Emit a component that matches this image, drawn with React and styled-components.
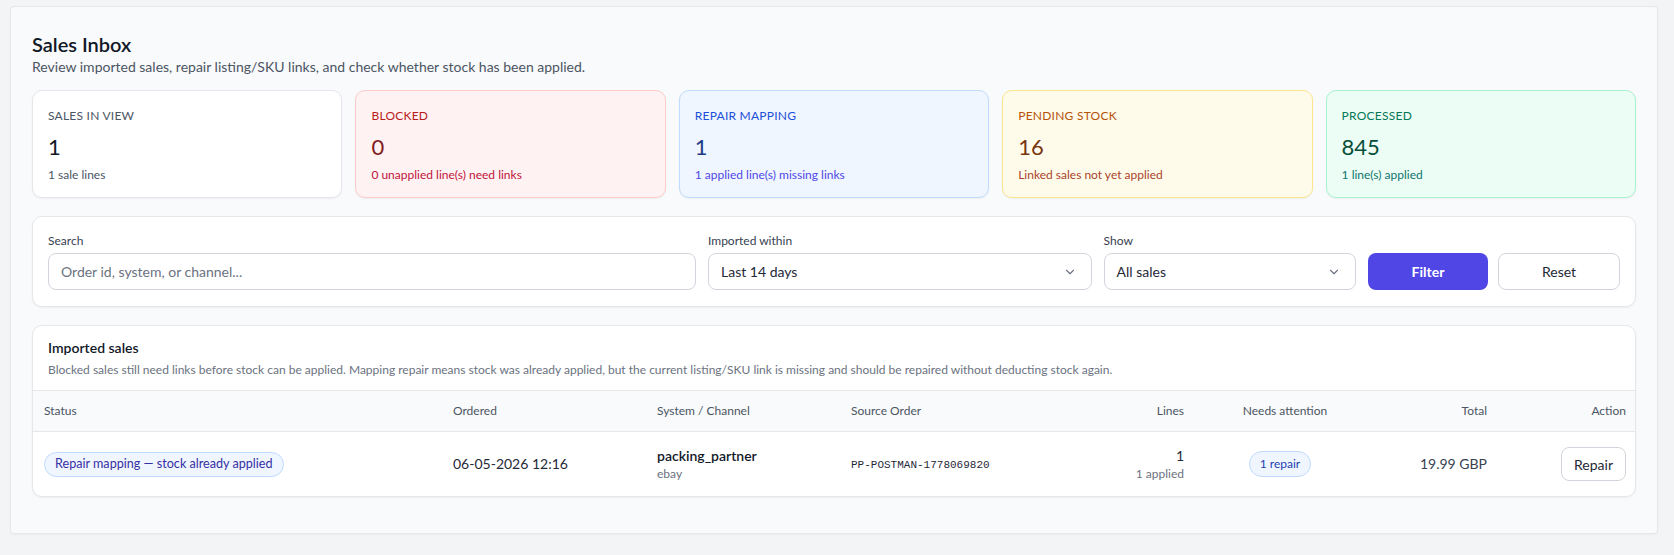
import styled, { createGlobalStyle } from "styled-components";

const GlobalStyle = createGlobalStyle`
  * { box-sizing: border-box; }
  body {
    margin: 0;
    background: #f3f4f6;
    font-family: Lato, "Noto Sans", sans-serif;
    color: #111827;
  }
`;

const tones = {
  neutral: { bg: "#ffffff", border: "#e5e7eb", label: "#4b5563", value: "#111827", sub: "#4b5563" },
  red: { bg: "#fef2f2", border: "#fecaca", label: "#b91c1c", value: "#7f1d1d", sub: "#be123c" },
  blue: { bg: "#eff6ff", border: "#bfdbfe", label: "#1d4ed8", value: "#1e3a8a", sub: "#4f46e5" },
  amber: { bg: "#fffbeb", border: "#fde68a", label: "#b45309", value: "#78350f", sub: "#a8432a" },
  green: { bg: "#ecfdf5", border: "#a7f3d0", label: "#047857", value: "#064e3b", sub: "#0f766e" },
};

const stats = [
  { label: "Sales in view", value: "1", sub: "1 sale lines", tone: "neutral" },
  { label: "Blocked", value: "0", sub: "0 unapplied line(s) need links", tone: "red" },
  { label: "Repair mapping", value: "1", sub: "1 applied line(s) missing links", tone: "blue" },
  { label: "Pending stock", value: "16", sub: "Linked sales not yet applied", tone: "amber" },
  { label: "Processed", value: "845", sub: "1 line(s) applied", tone: "green" },
];

const Chevron = () => (
  <svg width="14" height="14" viewBox="0 0 20 20" fill="none" stroke="#6b7280" strokeWidth="1.6" strokeLinecap="round" strokeLinejoin="round">
    <path d="M5 7.5l5 5 5-5" />
  </svg>
);

export default function App() {
  return (
    <Page>
      <GlobalStyle />
      <Panel>
        <Title>Sales Inbox</Title>
        <Subtitle>Review imported sales, repair listing/SKU links, and check whether stock has been applied.</Subtitle>

        <StatGrid>
          {stats.map((s) => (
            <StatCard key={s.label} $tone={s.tone}>
              <StatLabel $tone={s.tone}>{s.label}</StatLabel>
              <StatValue $tone={s.tone}>{s.value}</StatValue>
              <StatSub $tone={s.tone}>{s.sub}</StatSub>
            </StatCard>
          ))}
        </StatGrid>

        <FilterCard>
          <Field>
            <FieldLabel>Search</FieldLabel>
            <TextInput placeholder="Order id, system, or channel..." />
          </Field>
          <Field>
            <FieldLabel>Imported within</FieldLabel>
            <SelectBox>
              <span>Last 14 days</span>
              <Chevron />
            </SelectBox>
          </Field>
          <Field>
            <FieldLabel>Show</FieldLabel>
            <SelectBox>
              <span>All sales</span>
              <Chevron />
            </SelectBox>
          </Field>
          <Buttons>
            <PrimaryButton>Filter</PrimaryButton>
            <OutlineButton>Reset</OutlineButton>
          </Buttons>
        </FilterCard>

        <TableCard>
          <TableHead>
            <TableTitle>Imported sales</TableTitle>
            <TableDesc>
              Blocked sales still need links before stock can be applied. Mapping repair means stock was already applied, but the current listing/SKU link is missing and should be repaired without deducting stock again.
            </TableDesc>
          </TableHead>
          <Table>
            <colgroup>
              <col style={{ width: 409 }} />
              <col style={{ width: 204 }} />
              <col style={{ width: 194 }} />
              <col style={{ width: 235 }} />
              <col style={{ width: 120 }} />
              <col style={{ width: 180 }} />
              <col style={{ width: 123 }} />
              <col style={{ width: 139 }} />
            </colgroup>
            <thead>
              <tr>
                <Th>Status</Th>
                <Th>Ordered</Th>
                <Th>System / Channel</Th>
                <Th>Source Order</Th>
                <Th $align="right">Lines</Th>
                <Th $align="center">Needs attention</Th>
                <Th $align="right">Total</Th>
                <Th $align="right">Action</Th>
              </tr>
            </thead>
            <tbody>
              <tr>
                <Td>
                  <Pill>Repair mapping — stock already applied</Pill>
                </Td>
                <Td>06-05-2026 12:16</Td>
                <Td>
                  <Strong>packing_partner</Strong>
                  <Muted>ebay</Muted>
                </Td>
                <Td>
                  <Mono>PP-POSTMAN-1778069820</Mono>
                </Td>
                <Td $align="right">
                  <div>1</div>
                  <Muted>1 applied</Muted>
                </Td>
                <Td $align="center">
                  <Pill $small>1 repair</Pill>
                </Td>
                <Td $align="right" $soft>19.99 GBP</Td>
                <Td $align="right">
                  <SmallButton>Repair</SmallButton>
                </Td>
              </tr>
            </tbody>
          </Table>
        </TableCard>
      </Panel>
    </Page>
  );
}

const Page = styled.div`
  padding: 6px 16px 23px 10px;
`;

const Panel = styled.div`
  background: #f9fafb;
  border: 1px solid #e5e7eb;
  border-radius: 4px;
  box-shadow: 0 1px 2px rgba(0, 0, 0, 0.04);
  padding: 26px 21px 36px;
`;

const Title = styled.h1`
  margin: 0;
  font-size: 20px;
  line-height: 22px;
  font-weight: 600;
  color: #111827;
`;

const Subtitle = styled.p`
  margin: 2px 0 0;
  font-size: 14px;
  line-height: 20px;
  color: #4b5563;
`;

const StatGrid = styled.div`
  margin-top: 13px;
  display: grid;
  grid-template-columns: repeat(5, minmax(0, 1fr));
  gap: 13px;
`;

const StatCard = styled.div`
  background: ${(p) => tones[p.$tone].bg};
  border: 1px solid ${(p) => tones[p.$tone].border};
  border-radius: 10px;
  box-shadow: 0 1px 2px rgba(0, 0, 0, 0.05);
  padding: 17px 15px 13px;
  height: 108px;
`;

const StatLabel = styled.div`
  font-size: 12px;
  line-height: 16px;
  text-transform: uppercase;
  letter-spacing: 0.02em;
  color: ${(p) => tones[p.$tone].label};
`;

const StatValue = styled.div`
  margin-top: 9px;
  font-size: 22px;
  line-height: 28px;
  color: ${(p) => tones[p.$tone].value};
`;

const StatSub = styled.div`
  margin-top: 6px;
  font-size: 12px;
  line-height: 16px;
  color: ${(p) => tones[p.$tone].sub};
`;

const FilterCard = styled.div`
  margin-top: 18px;
  background: #fff;
  border: 1px solid #e5e7eb;
  border-radius: 10px;
  box-shadow: 0 1px 2px rgba(0, 0, 0, 0.05);
  padding: 16px 15px 16px;
  display: grid;
  grid-template-columns: 647fr 383fr 252fr auto;
  gap: 12px;
  align-items: end;
`;

const Field = styled.label`
  display: flex;
  flex-direction: column;
  gap: 4px;
  min-width: 0;
`;

const FieldLabel = styled.span`
  font-size: 12px;
  line-height: 16px;
  color: #374151;
`;

const inputBase = `
  height: 37px;
  border: 1px solid #d1d5db;
  border-radius: 8px;
  background: #fff;
  font-family: Lato, "Noto Sans", sans-serif;
  font-size: 14px;
  color: #1f2937;
  padding: 0 12px;
`;

const TextInput = styled.input`
  ${inputBase}
  width: 100%;
  outline: none;
  &::placeholder { color: #6b7280; }
`;

const SelectBox = styled.div`
  ${inputBase}
  display: flex;
  align-items: center;
  justify-content: space-between;
  padding-right: 14px;
`;

const Buttons = styled.div`
  display: flex;
  gap: 10px;
`;

const PrimaryButton = styled.button`
  width: 120px;
  height: 37px;
  border: none;
  border-radius: 8px;
  background: #4f46e5;
  color: #fff;
  font-family: Lato, "Noto Sans", sans-serif;
  font-size: 14px;
  font-weight: 700;
`;

const OutlineButton = styled(PrimaryButton)`
  width: 122px;
  background: #fff;
  border: 1px solid #d1d5db;
  color: #1f2937;
  font-weight: 400;
`;

const TableCard = styled.div`
  margin-top: 18px;
  background: #fff;
  border: 1px solid #e5e7eb;
  border-radius: 10px;
  box-shadow: 0 1px 2px rgba(0, 0, 0, 0.05);
  overflow: hidden;
`;

const TableHead = styled.div`
  padding: 12px 15px 12px;
  border-bottom: 1px solid #e5e7eb;
`;

const TableTitle = styled.div`
  font-size: 14px;
  line-height: 20px;
  font-weight: 600;
  color: #111827;
`;

const TableDesc = styled.div`
  margin-top: 4px;
  font-size: 12px;
  line-height: 16px;
  color: #6b7280;
`;

const Table = styled.table`
  width: 100%;
  border-collapse: collapse;
  table-layout: fixed;
`;

const Th = styled.th`
  background: #f9fafb;
  border-bottom: 1px solid #e5e7eb;
  padding: 12px 11px;
  font-size: 12px;
  line-height: 16px;
  font-weight: 400;
  color: #4b5563;
  text-align: ${(p) => p.$align || "left"};
`;

const Td = styled.td`
  padding: 14px 11px;
  font-size: 14px;
  line-height: 20px;
  color: ${(p) => (p.$soft ? "#374151" : "#1f2937")};
  vertical-align: middle;
  text-align: ${(p) => p.$align || "left"};
`;

const Pill = styled.span`
  display: inline-flex;
  align-items: center;
  height: ${(p) => (p.$small ? "26px" : "25px")};
  padding: 0 10px;
  margin-right: ${(p) => (p.$small ? "10px" : "0")};
  border-radius: 999px;
  background: #eff6ff;
  border: 1px solid #bfdbfe;
  color: ${(p) => (p.$small ? "#1e40af" : "#3730a3")};
  font-size: ${(p) => (p.$small ? "12px" : "12.6px")};
  font-weight: 400;
`;

const Strong = styled.div`
  font-weight: 600;
  color: #111827;
`;

const Muted = styled.div`
  font-size: 12px;
  line-height: 16px;
  color: #6b7280;
`;

const Mono = styled.span`
  font-family: "Liberation Mono", monospace;
  font-size: 11px;
  color: #1f2937;
`;

const SmallButton = styled.button`
  height: 34px;
  padding: 0 12px;
  border: 1px solid #d1d5db;
  border-radius: 8px;
  background: #fff;
  font-family: Lato, "Noto Sans", sans-serif;
  font-size: 14px;
  color: #1f2937;
`;
